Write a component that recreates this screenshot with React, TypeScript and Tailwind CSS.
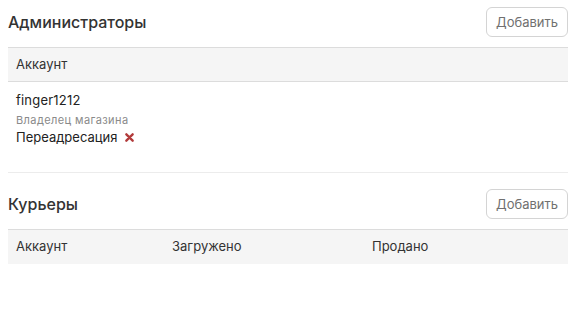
import React from "react";

function AddButton() {
  return (
    <button className="h-[30px] px-[9px] rounded-[6px] border border-[#d4d4d4] bg-white text-[13px] text-[#707070] leading-none">
      Добавить
    </button>
  );
}

export default function App() {
  return (
    <div className="pl-2 pr-3 bg-white text-[#333] min-h-[314px]" style={{ fontFamily: "Inter, 'Noto Sans', sans-serif" }}>
      <div className="flex items-center justify-between pt-[7px]">
        <h2 className="text-[16px] font-medium text-[#333]">Администраторы</h2>
        <AddButton />
      </div>
      <div className="mt-[10px] h-[35px] flex items-center px-2 bg-[#f5f5f5] border-y border-[#dcdcdc] text-[13px] text-[#333]">
        Аккаунт
      </div>
      <div className="px-2 pt-[9px] pb-[26px] border-b border-[#ececec]">
        <div className="text-[13px] leading-[18px] text-[#222] tracking-[0.2px]">finger1212</div>
        <div className="text-[11px] leading-[15px] mt-[4px] text-[#8a8a8a] tracking-[0.4px]">Владелец магазина</div>
        <div className="text-[13px] leading-[18px] text-[#222] flex items-center gap-[8px]">
          <span>Переадресация</span>
          <svg width="9" height="9" viewBox="0 0 10 10" className="mt-[1px]">
            <path d="M1.5 1.5 L8.5 8.5 M8.5 1.5 L1.5 8.5" stroke="#b23b3b" strokeWidth="2.6" strokeLinecap="round" />
          </svg>
        </div>
      </div>
      <div className="flex items-center justify-between pt-[16px]">
        <h2 className="text-[16px] font-medium text-[#333]">Курьеры</h2>
        <AddButton />
      </div>
      <div className="mt-[10px] h-[35px] grid grid-cols-[156px_200px_1fr] items-center px-2 bg-[#f5f5f5] border-t border-[#dcdcdc] text-[13px] text-[#333]">
        <span>Аккаунт</span>
        <span>Загружено</span>
        <span>Продано</span>
      </div>
    </div>
  );
}
